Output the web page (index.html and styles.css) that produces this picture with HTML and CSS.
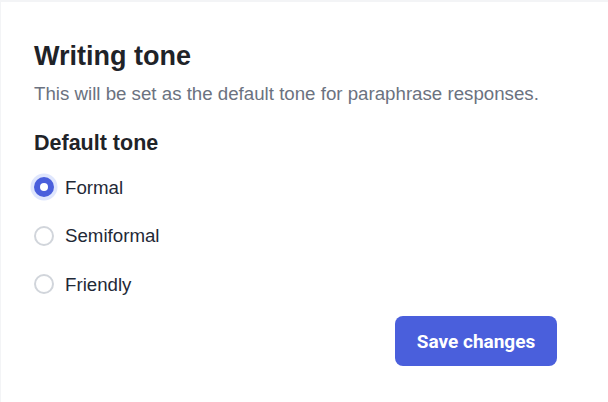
FILE: index.html
```html
<!DOCTYPE html>
<html>
<head>
<meta charset="utf-8">
<link rel="stylesheet" href="styles.css">
</head>
<body>
<div class="panel">
  <h1 class="title">Writing tone</h1>
  <p class="subtitle">This will be set as the default tone for paraphrase responses.</p>
  <h2 class="section">Default tone</h2>
  <div class="options">
    <label class="option"><span class="radio checked"><span class="dot"></span></span><span class="label">Formal</span></label>
    <label class="option"><span class="radio"></span><span class="label">Semiformal</span></label>
    <label class="option"><span class="radio"></span><span class="label">Friendly</span></label>
  </div>
  <div class="actions">
    <button class="save">Save changes</button>
  </div>
</div>
</body>
</html>
```
FILE: styles.css
```css
html, body {
  margin: 0;
  padding: 0;
  background: #f3f4f6;
  height: 100%;
}
body {
  padding: 2px 0 0 1px;
  box-sizing: border-box;
  overflow: hidden;
}
.panel {
  background: #fff;
  height: 100%;
  box-sizing: border-box;
  padding: 37.7px 51px 0 33px;
  font-family: "Liberation Sans", Arial, sans-serif;
}
.title {
  margin: 0;
  font-size: 27px;
  line-height: 32px;
  font-weight: 700;
  color: #1f2328;
}
.subtitle {
  margin: 9px 0 0;
  font-size: 18.7px;
  line-height: 26px;
  color: #6b7280;
}
.section {
  margin: 22px 0 0;
  font-size: 21.5px;
  line-height: 28px;
  font-weight: 700;
  color: #1f2328;
}
.options {
  display: flex;
  flex-direction: column;
  gap: 24.5px;
  margin-top: 19px;
}
.option {
  display: flex;
  align-items: center;
  gap: 11px;
  height: 24px;
  font-size: 18.7px;
  line-height: 24px;
  color: #1f2937;
}
.radio {
  width: 20px;
  height: 20px;
  border: 2px solid #d1d5db;
  border-radius: 50%;
  box-sizing: border-box;
  display: flex;
  align-items: center;
  justify-content: center;
  margin-top: -1px;
}
.radio.checked {
  border: none;
  background: #4a5fdc;
  box-shadow: 0 0 0 3.5px #dfe6fd;
}
.dot {
  width: 8px;
  height: 8px;
  border-radius: 50%;
  background: #fff;
}
.actions {
  display: flex;
  justify-content: flex-end;
  margin-top: 19.5px;
}
.save {
  width: 162px;
  height: 50px;
  border: none;
  border-radius: 8px;
  background: #4a5fdc;
  color: #fff;
  font-family: Roboto, "Liberation Sans", sans-serif;
  font-weight: 700;
  font-size: 19px;
}
```
